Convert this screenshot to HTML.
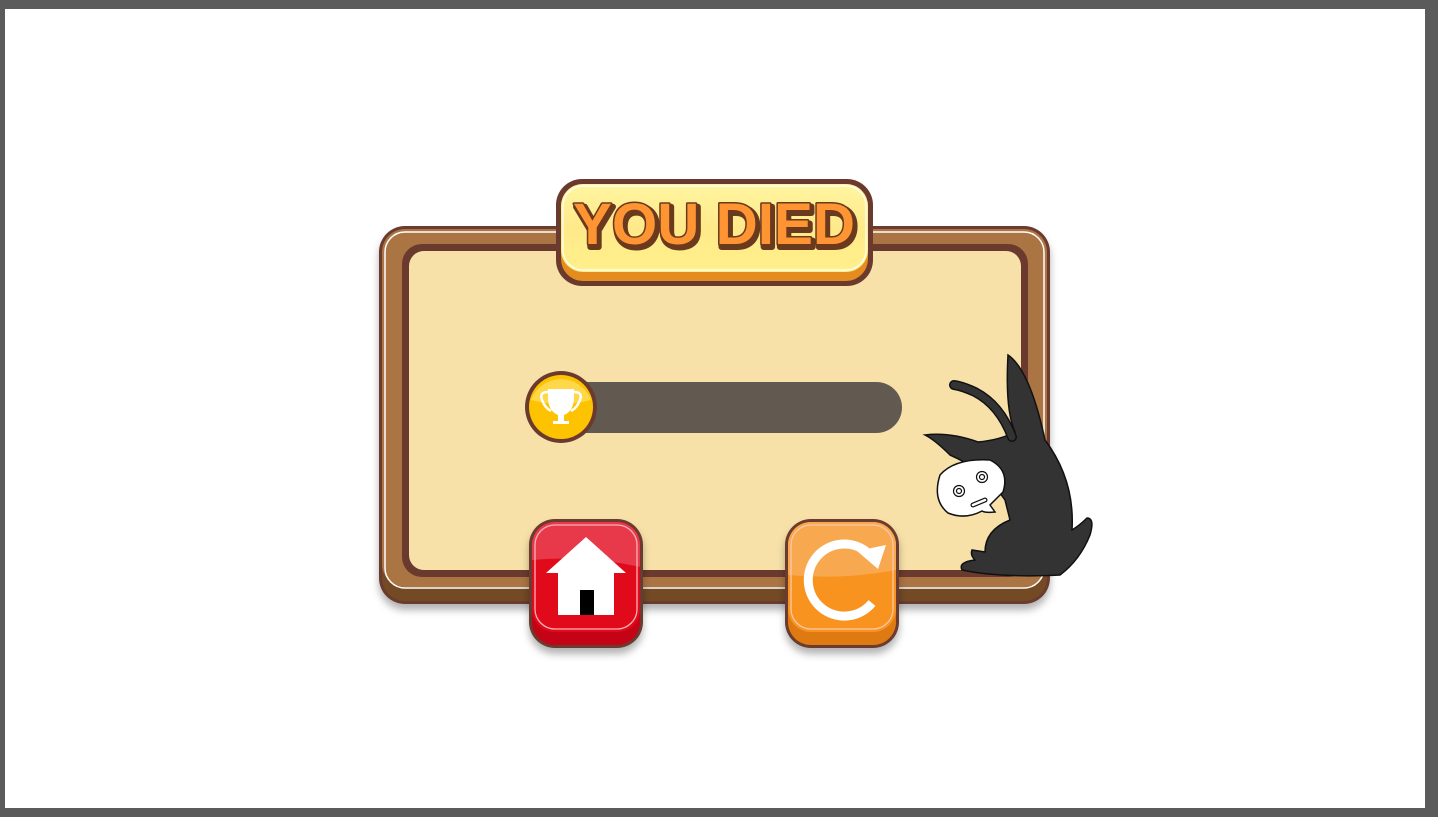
<!DOCTYPE html>
<html><head><style>
html,body{margin:0;padding:0}
body{width:1438px;height:817px;background:#5b5b5b;position:relative;overflow:hidden;font-family:"Liberation Sans",sans-serif}
.stage{position:absolute;left:5px;top:9px;width:1420px;height:799px;background:#fff}
</style></head><body>
<div class="stage"></div>
<svg width="1438" height="817" style="position:absolute;left:0;top:0">
<defs>
<filter id="sh" x="-10%" y="-10%" width="120%" height="130%"><feDropShadow dx="0" dy="6" stdDeviation="4" flood-color="#000" flood-opacity="0.3"/></filter>
<linearGradient id="yl" x1="0" y1="0" x2="0" y2="1"><stop offset="0" stop-color="#fff5a0"/><stop offset="0.5" stop-color="#ffe98a"/><stop offset="1" stop-color="#fff08a"/></linearGradient>
</defs>
<g filter="url(#sh)">
<rect x="379" y="226" width="671" height="378" rx="26" fill="#6b3a2e"/>
</g>
<rect x="382" y="229" width="665" height="372" rx="23" fill="#734a24"/>
<rect x="382" y="229" width="665" height="358" rx="23" fill="#ab7443"/>
<rect x="385" y="232" width="659" height="356" rx="20" fill="none" stroke="#fff" stroke-width="1.5"/>
<rect x="402" y="244" width="626" height="333" rx="20" fill="#6b3a2e"/>
<rect x="409" y="251" width="612" height="319" rx="15" fill="#f7e1a8"/>
<rect x="556" y="179" width="317" height="107" rx="26" fill="#6b3a2e"/>
<rect x="561" y="184" width="307" height="97" rx="22" fill="#e58c1e"/>
<rect x="561" y="184" width="307" height="88" rx="22" fill="url(#yl)"/>
<rect x="563" y="186" width="303" height="84" rx="20" fill="none" stroke="#fff" stroke-width="1.2"/>
<text x="714" y="244" text-anchor="middle" font-family="Liberation Sans" font-weight="bold" font-size="58" fill="#6b3a1e" stroke="#6b3a1e" stroke-width="6" stroke-linejoin="round" textLength="282" lengthAdjust="spacingAndGlyphs" transform="translate(2,3)">YOU DIED</text>
<text x="714" y="244" text-anchor="middle" font-family="Liberation Sans" font-weight="bold" font-size="58" fill="#ff9433" stroke="#6b3a1e" stroke-width="3" stroke-linejoin="round" textLength="282" lengthAdjust="spacingAndGlyphs" paint-order="stroke">YOU DIED</text>
<rect x="560" y="382" width="342" height="51" rx="25.5" fill="#625a50"/>
<circle cx="561" cy="407" r="36" fill="#6b3a2e"/>
<circle cx="561" cy="407" r="32" fill="#fdc200"/>
<path d="M531 400 A32 32 0 0 1 591 400 Q561 408 531 400Z" fill="#ffd84a"/>
<path d="M548 389h26v8q0 14-10 18v6h5v3h-16v-3h5v-6q-10-4-10-18z" fill="#fff"/>
<path d="M548 392q-9 0-6 8t9 11M574 392q9 0 6 8t-9 11" fill="none" stroke="#fff" stroke-width="2.5"/>
<g filter="url(#sh)"><rect x="529" y="519" width="114" height="129" rx="26" fill="#6b3a2e"/></g>
<rect x="532" y="522" width="108" height="123" rx="23" fill="#c40416"/>
<rect x="532" y="522" width="108" height="110" rx="23" fill="#e00a1a"/>
<path d="M532 560V545a23 23 0 0 1 23-23h62a23 23 0 0 1 23 23v22q-54-12-108-7z" fill="#e8394a"/>
<rect x="535" y="525" width="102" height="104" rx="20" fill="none" stroke="#f5b0b8" stroke-width="1.3"/>
<path d="M546 573L586 537L626 573H614V615H558V573Z" fill="#fff"/>
<rect x="580" y="590" width="14" height="25" fill="#000"/>
<g filter="url(#sh)"><rect x="785" y="519" width="114" height="129" rx="26" fill="#6b3a2e"/></g>
<rect x="788" y="522" width="108" height="123" rx="23" fill="#df7a12"/>
<rect x="788" y="522" width="108" height="110" rx="23" fill="#f7931e"/>
<path d="M788 575V545a23 23 0 0 1 23-23h62a23 23 0 0 1 23 23v25q-54 10-108 5z" fill="#f8a94f"/>
<rect x="791" y="525" width="102" height="104" rx="20" fill="none" stroke="#f8c8a8" stroke-width="1.3"/>
<path d="M868 553 A36 36 0 1 0 872 603" fill="none" stroke="#fff" stroke-width="9"/>
<path d="M857 551L886 545L878 569Z" fill="#fff"/>
<g stroke="#111" stroke-width="1.5" fill="#333">
<path d="M1008 355Q1030 370 1045 440Q1075 480 1072 530Q1080 525 1087 518Q1095 518 1090 535Q1080 560 1060 575Q1000 578 962 570Q958 562 975 560Q970 555 972 550L985 552Q985 530 1010 520L1005 500Q985 470 950 455Q935 440 925 435Q950 432 978 442Q1000 440 1015 432Q1005 410 1008 355Z"/>
</g>
<path d="M1012 437Q1000 405 975 392Q962 386 954 385" fill="none" stroke="#111" stroke-width="10" stroke-linecap="round"/>
<path d="M1012 437Q1000 405 975 392Q962 386 954 385" fill="none" stroke="#333" stroke-width="7" stroke-linecap="round"/>
<path d="M940 475Q955 458 990 460Q1010 470 1003 492Q995 500 990 505L995 512Q985 513 982 511Q965 520 948 513Q932 500 940 475Z" fill="#fff" stroke="#111" stroke-width="1.5"/>
<g fill="none" stroke="#111" stroke-width="1.2">
<circle cx="959" cy="491" r="5.5"/><circle cx="959" cy="491" r="2.5"/>
<circle cx="982" cy="477" r="5.5"/><circle cx="982" cy="477" r="2.5"/>
<path d="M973 505L985 500" stroke-width="5" stroke-linecap="round"/>
</g>
<path d="M973 505L985 500" stroke="#fff" stroke-width="2.5" stroke-linecap="round"/>
</svg>
</body></html>
